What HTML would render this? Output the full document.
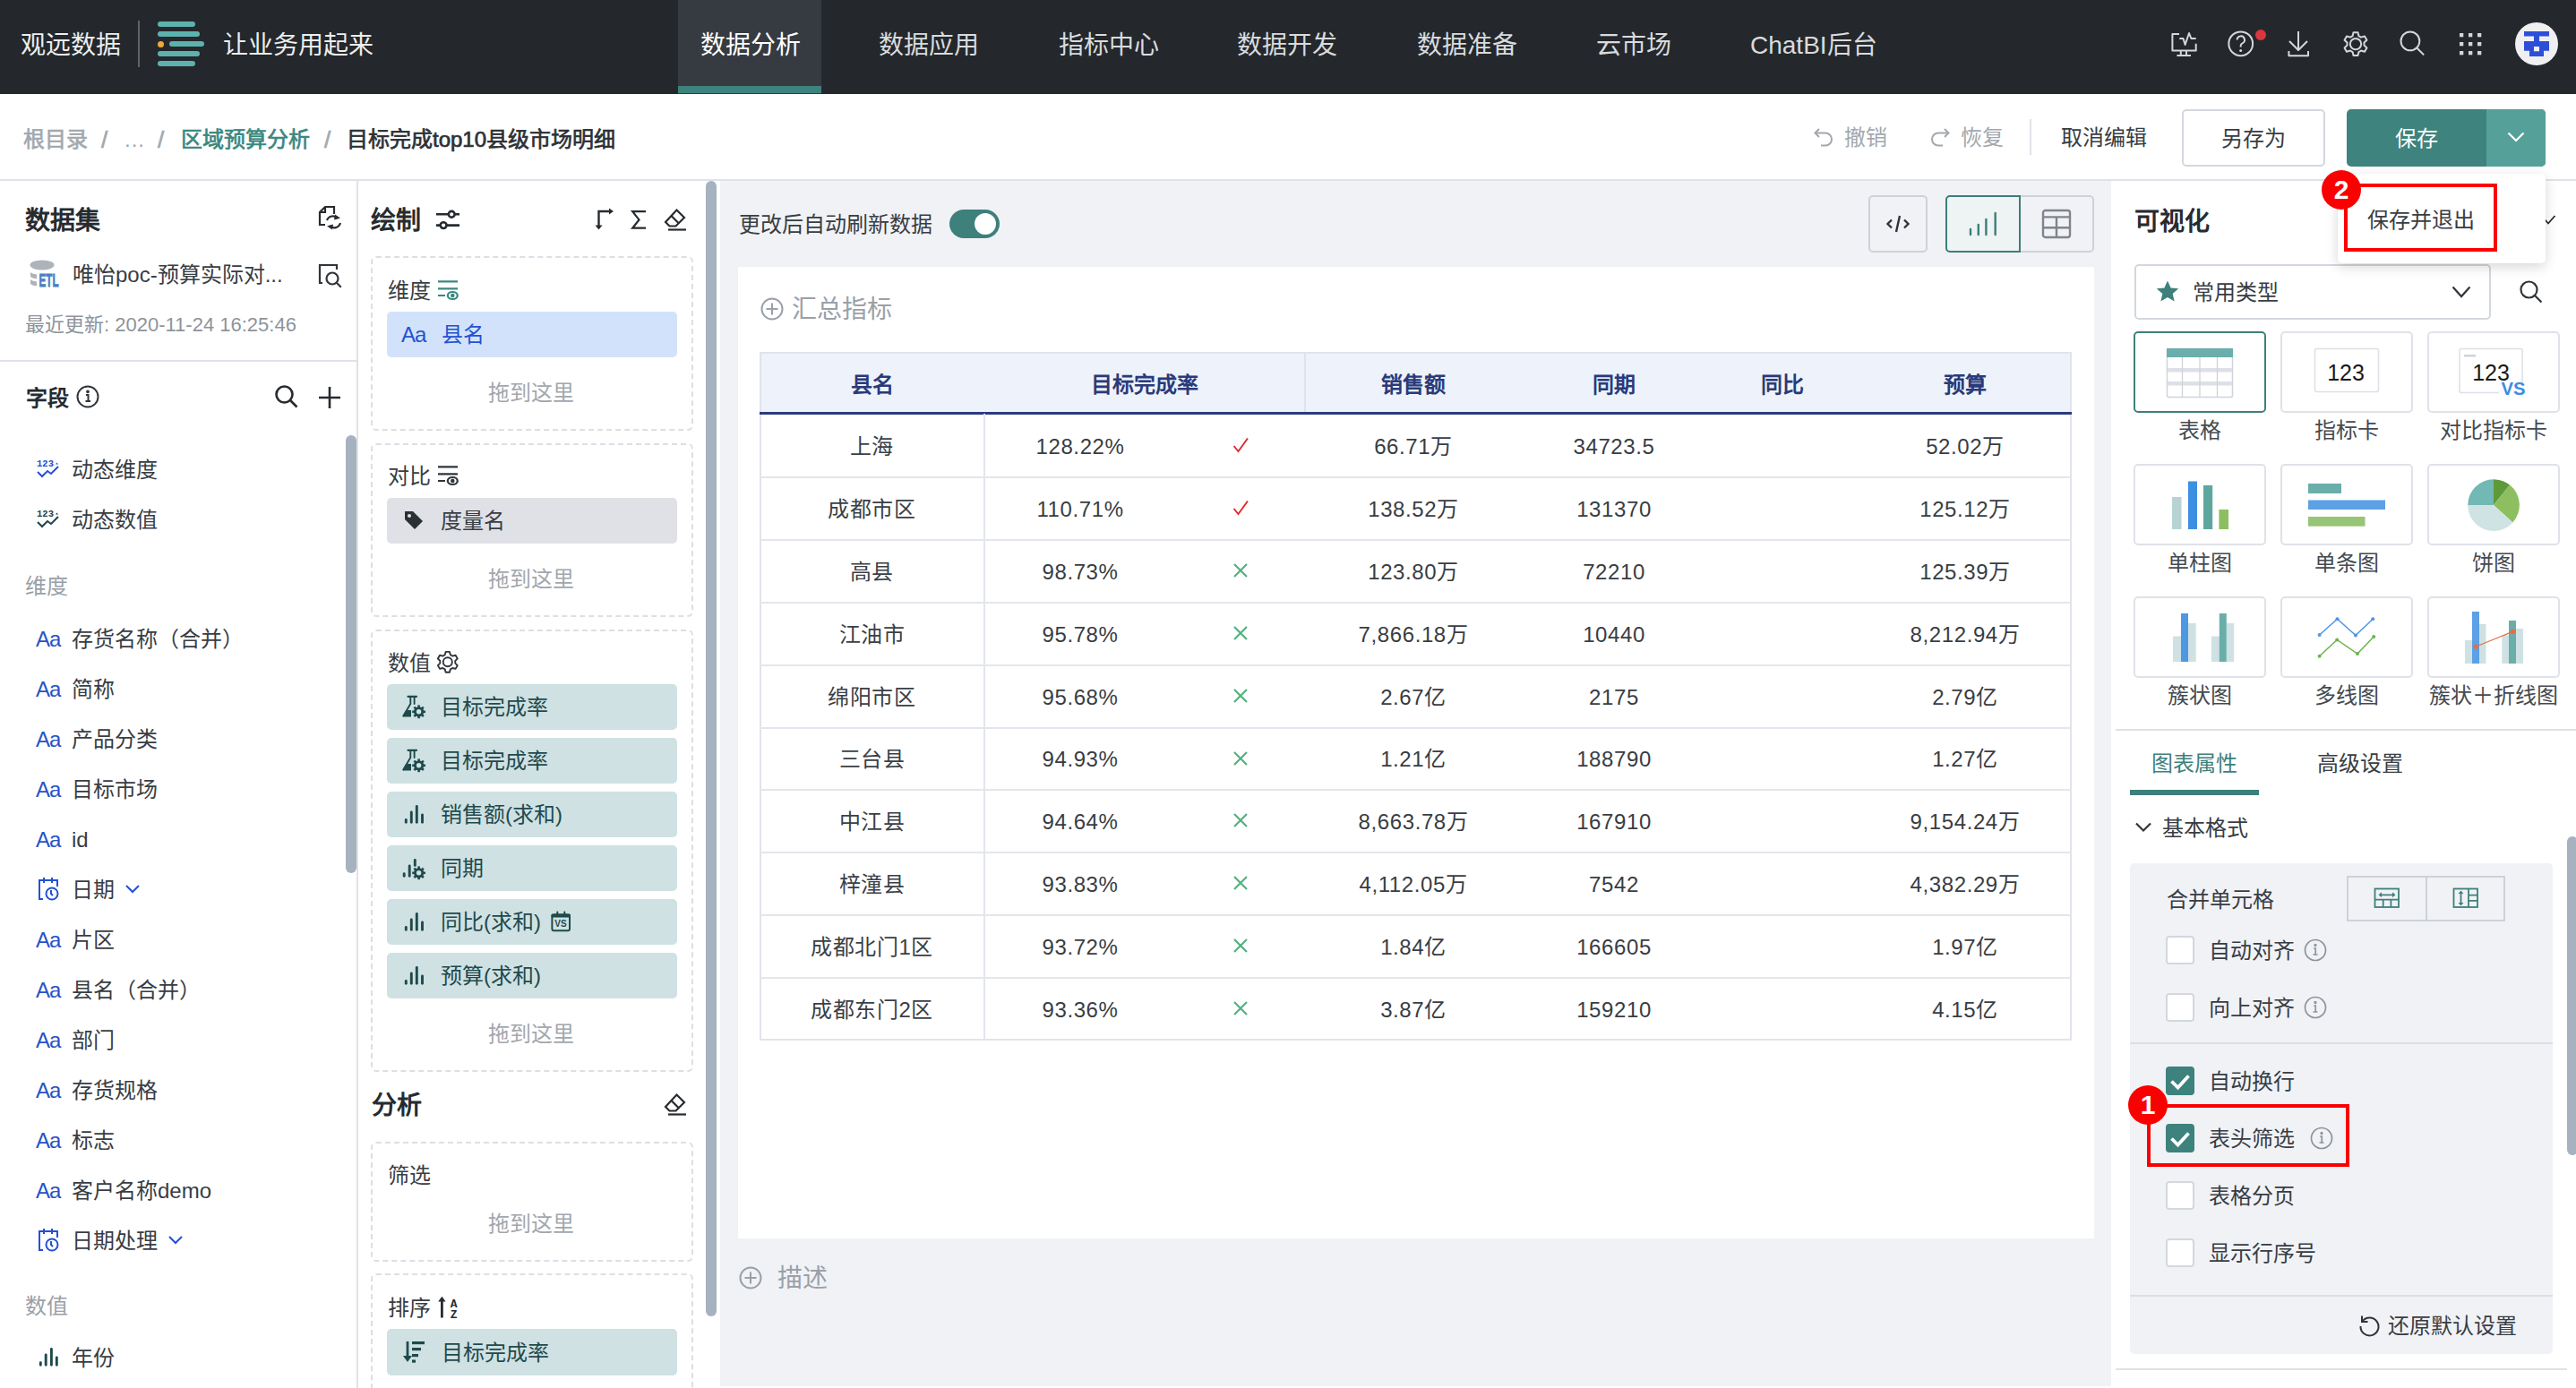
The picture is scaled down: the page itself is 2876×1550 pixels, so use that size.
<!DOCTYPE html>
<html lang="zh-CN">
<head>
<meta charset="utf-8">
<style>
*{box-sizing:border-box;margin:0;padding:0}
html,body{width:2876px;height:1550px;overflow:hidden;background:#fff}
body{font-family:"Liberation Sans",sans-serif;color:#383d43;position:relative}
.a{position:absolute}
.t{position:absolute;white-space:nowrap;line-height:40px;height:40px;margin-top:1px}
svg{position:absolute;overflow:visible}
/* nav */
#nav{left:0;top:0;width:2876px;height:105px;background:#24282c}
.nt{font-size:28px;color:#d9dbdd;top:29px;margin-top:2px}
/* crumb */
#crumb{left:0;top:105px;width:2876px;height:95px;background:#fff}
#crumbline{left:0;top:200px;width:2876px;height:2px;background:#dfe2e8}
.cb{font-size:24px;font-weight:normal;top:135px;-webkit-text-stroke:0.7px currentColor}
/* panels */
#p1{left:0;top:202px;width:398px;height:1348px;background:#fff}
#p1b{left:398px;top:202px;width:2px;height:1348px;background:#dfe2e8}
#p2{left:400px;top:202px;width:404px;height:1348px;background:#fff}
#canvas{left:804px;top:202px;width:1553px;height:1346px;background:#f1f2f6}
#p3{left:2357px;top:202px;width:519px;height:1348px;background:#fff}
.h28{font-size:28px;font-weight:bold;color:#262b30;margin-top:2px}
.f24{font-size:24px}
.fi{font-size:24px;color:#383d43}
.aa{font-size:24px;color:#2752c6;letter-spacing:-1px}
.box{position:absolute;border:2px dashed #dcdfe6;border-radius:6px}
.chip{position:absolute;left:432px;width:324px;height:51px;border-radius:5px;background:#cfe1e3}
.drop{font-size:24px;color:#a2a7ad}
.sb{position:absolute;background:#a6b2bf;border-radius:6px}
/* table */
.th{position:absolute;font-size:24px;font-weight:bold;color:#2a3a7a;text-align:center;line-height:40px;margin-top:2px}
.td{position:absolute;font-size:24px;color:#383d43;text-align:center;line-height:40px;margin-top:2px;letter-spacing:0.6px}
.tile{position:absolute;width:148px;height:91px;border:2px solid #dfe2e8;border-radius:5px;background:#fff}
.tl{position:absolute;font-size:24px;color:#454a50;text-align:center;width:180px;line-height:40px}
.ck{position:absolute;left:2418px;width:32px;height:32px;border:2px solid #d3d7de;border-radius:4px;background:#fff}
.ckd{background:#3d827d;border-color:#3d827d}
.ct{font-size:24px;color:#383d43;left:2466px}
.red{position:absolute;border:4px solid #fb0000}
.rc{position:absolute;width:44px;height:44px;border-radius:50%;background:#fb0000;color:#fff;font-weight:bold;font-size:30px;text-align:center;line-height:44px}
</style>
</head>
<body>
<!-- NAV -->
<div id="nav" class="a"></div>
<div class="t nt" style="left:23px;color:#eceeef">观远数据</div>
<div class="a" style="left:154px;top:23px;width:2px;height:52px;background:#5f6469"></div>
<div class="a" style="left:176px;top:24px;width:42px;height:6px;border-radius:3px;background:#5cb3ae"></div>
<div class="a" style="left:176px;top:35px;width:47px;height:6px;border-radius:3px;background:#5cb3ae"></div>
<div class="a" style="left:176px;top:45.5px;width:7px;height:7px;border-radius:50%;background:#efa93a"></div>
<div class="a" style="left:189px;top:46px;width:39px;height:6px;border-radius:3px;background:#5cb3ae"></div>
<div class="a" style="left:176px;top:57px;width:47px;height:6px;border-radius:3px;background:#5cb3ae"></div>
<div class="a" style="left:176px;top:68px;width:42px;height:6px;border-radius:3px;background:#5cb3ae"></div>
<div class="t nt" style="left:249px;color:#eceeef">让业务用起来</div>
<div class="a" style="left:757px;top:0;width:160px;height:105px;background:#363b41"></div>
<div class="a" style="left:757px;top:96px;width:160px;height:8px;background:#3d827d"></div>
<div class="t nt" style="left:782px;color:#fff">数据分析</div>
<div class="t nt" style="left:981px">数据应用</div>
<div class="t nt" style="left:1182px">指标中心</div>
<div class="t nt" style="left:1381px">数据开发</div>
<div class="t nt" style="left:1582px">数据准备</div>
<div class="t nt" style="left:1782px">云市场</div>
<div class="t nt" style="left:1954px">ChatBI后台</div>
<!-- NAV ICONS -->
<!-- monitor -->
<svg style="left:2410px;top:25px" width="260" height="50" viewBox="2410 25 260 50" fill="none" stroke="#d4d7da" stroke-width="2" stroke-linejoin="round">
<path d="M2433 38H2425.4V56.6H2451.7V48.8"/><path d="M2433.3 43H2437.5L2439.6 50L2444 37L2446.4 43H2451.7"/><path d="M2434.8 57v5M2441 57v5M2430.4 62H2446"/>
<circle cx="2501.7" cy="48.8" r="13.4"/><path d="M2497.6 44.6a4.2 4.2 0 1 1 5.9 3.8c-1 .5-1.8 1.2-1.8 2.4v1.8"/>
<path d="M2566 35V56M2556 46L2566 56 2576 46M2555.4 57V62.2H2577V57"/>
<path d="M2627.53 36.13 L2632.47 36.13 L2633.44 40.14 L2636.04 41.64 L2639.99 40.47 L2642.47 44.76 L2639.48 47.60 L2639.48 50.60 L2642.47 53.44 L2639.99 57.73 L2636.04 56.56 L2633.44 58.06 L2632.47 62.07 L2627.53 62.07 L2626.56 58.06 L2623.96 56.56 L2620.01 57.73 L2617.53 53.44 L2620.52 50.60 L2620.52 47.60 L2617.53 44.76 L2620.01 40.47 L2623.96 41.64 L2626.56 40.14Z"/><circle cx="2630" cy="49.1" r="6.2"/>
</svg>
<svg style="left:2410px;top:25px" width="260" height="50" viewBox="2410 25 260 50" fill="#d4d7da"><circle cx="2501.7" cy="56.4" r="1.5"/></svg>
<div class="a" style="left:2518px;top:33px;width:12px;height:12px;border-radius:50%;background:#d9363e"></div>
<!-- search -->
<svg style="left:2678px;top:34px" width="32" height="32" viewBox="0 0 32 32" fill="none" stroke="#d4d7da" stroke-width="2">
<circle cx="12.9" cy="11.9" r="10.4"/><path d="M20.3 19.5l7.9 7.9"/></svg>
<!-- grid -->
<svg style="left:2746px;top:37px" width="26" height="25" viewBox="0 0 26 25" fill="#d4d7da">
<rect x="0" y="0" width="4.3" height="4.3"/><rect x="10" y="0" width="4.3" height="4.3"/><rect x="20" y="0" width="4.3" height="4.3"/>
<rect x="0" y="10" width="4.3" height="4.3"/><rect x="10" y="10" width="4.3" height="4.3"/><rect x="20" y="10" width="4.3" height="4.3"/>
<rect x="0" y="20" width="4.3" height="4.3"/><rect x="10" y="20" width="4.3" height="4.3"/><rect x="20" y="20" width="4.3" height="4.3"/></svg>
<!-- avatar -->
<div class="a" style="left:2808px;top:25px;width:48px;height:48px;border-radius:50%;background:#f0f0f2"></div>
<svg style="left:2808px;top:25px" width="48" height="48" viewBox="0 0 48 48" fill="#2d4fd8">
<path d="M10 10h28v5.5H27v5.6h11v10.7h-6v6.1H16v-6.1h-6V21.1h11v-5.6H10z M21 26.9v5.4h6v-5.4z" fill-rule="evenodd"/></svg>
<div class="a" style="left:2828px;top:17px;width:0;height:0"></div>


<!-- CRUMB -->
<div id="crumb" class="a"></div>
<div id="crumbline" class="a"></div>
<div class="t cb" style="left:26px;color:#a3a8ae">根目录</div>
<div class="t cb" style="left:113px;color:#a3a8ae;font-size:26px">/</div>
<div class="t cb" style="left:139px;color:#a3a8ae;-webkit-text-stroke:0;letter-spacing:1px">...</div>
<div class="t cb" style="left:176px;color:#a3a8ae;font-size:26px">/</div>
<div class="t cb" style="left:202px;color:#3b8780">区域预算分析</div>
<div class="t cb" style="left:362px;color:#a3a8ae;font-size:26px">/</div>
<div class="t cb" style="left:387px;color:#2c3136">目标完成top10县级市场明细</div>

<!-- undo -->
<svg style="left:2025px;top:143px" width="22" height="20" viewBox="0 0 22 20" fill="none" stroke="#a3a8ae" stroke-width="2">
<path d="M6 1L1.5 5.5 6 10"/><path d="M2 5.5h11a7 7 0 0 1 0 14H8"/></svg>
<div class="t" style="left:2059px;top:133px;font-size:24px;color:#a3a8ae">撤销</div>
<svg style="left:2155px;top:143px" width="22" height="20" viewBox="0 0 22 20" fill="none" stroke="#a3a8ae" stroke-width="2">
<path d="M16 1l4.5 4.5L16 10"/><path d="M20 5.5H9a7 7 0 0 0 0 14h5"/></svg>
<div class="t" style="left:2189px;top:133px;font-size:24px;color:#a3a8ae">恢复</div>
<div class="a" style="left:2266px;top:133px;width:2px;height:40px;background:#dfe2e8"></div>
<div class="t" style="left:2301px;top:133px;font-size:24px;color:#383d43">取消编辑</div>
<div class="a" style="left:2436px;top:122px;width:160px;height:64px;border:2px solid #d3d7de;border-radius:5px;background:#fff"></div>
<div class="t" style="left:2436px;top:134px;width:160px;text-align:center;font-size:24px;color:#383d43">另存为</div>
<div class="a" style="left:2620px;top:122px;width:222px;height:64px;border-radius:5px;background:#3e837e;overflow:hidden"><div class="a" style="left:156px;top:0;width:66px;height:64px;background:#56a09a"></div></div>
<div class="t" style="left:2620px;top:134px;width:156px;text-align:center;font-size:24px;color:#fff">保存</div>
<svg style="left:2799px;top:147px" width="20" height="12" viewBox="0 0 20 12" fill="none" stroke="#fff" stroke-width="2.2"><path d="M1.5 1.5L10 10l8.5-8.5"/></svg>


<!-- PANELS -->
<div id="p1" class="a"></div>
<div id="p1b" class="a"></div>
<div id="p2" class="a"></div>
<div id="canvas" class="a"></div>
<div id="p3" class="a"></div>
<!-- CANVAS CONTENT -->
<div class="t" style="left:825px;top:230px;font-size:24px;color:#383d43">更改后自动刷新数据</div>
<div class="a" style="left:1060px;top:234px;width:56px;height:32px;border-radius:16px;background:#3d807c"></div>
<div class="a" style="left:1088px;top:238px;width:24px;height:24px;border-radius:50%;background:#fff"></div>
<div class="a" style="left:2086px;top:218px;width:66px;height:64px;border:2px solid #cdd1d8;border-radius:5px"></div>
<svg style="left:2106px;top:240px" width="26" height="20" viewBox="0 0 26 20" fill="none" stroke="#30353b" stroke-width="2.4">
<path d="M6 5.5L1.5 10 6 14.5M20 5.5l4.5 4.5-4.5 4.5M15 1l-4 18"/></svg>
<div class="a" style="left:2172px;top:218px;width:166px;height:64px;border:2px solid #cdd1d8;border-radius:5px"></div>
<div class="a" style="left:2172px;top:218px;width:84px;height:64px;border:2px solid #3a7f7a;border-radius:5px 0 0 5px;background:#eef3f3"></div>
<svg style="left:2196px;top:234px" width="36" height="32" viewBox="0 0 36 32" fill="none" stroke="#3a7f7a" stroke-width="2.4" stroke-linecap="round">
<path d="M4 22v6M12.8 17v11M21.4 11v17M31.7 4v24"/></svg>
<svg style="left:2279px;top:233px" width="34" height="34" viewBox="0 0 34 34" fill="none" stroke="#80848c" stroke-width="2.4">
<rect x="2" y="2" width="30" height="30" rx="2.5"/><path d="M2 9.4h30M2 21.2h30M17 9.4V32"/></svg>

<div class="a" style="left:824px;top:298px;width:1514px;height:1085px;background:#fff"></div>
<svg style="left:849px;top:332px" width="26" height="26" viewBox="0 0 26 26" fill="none" stroke="#9aa0a8" stroke-width="2">
<circle cx="13" cy="13" r="11.5"/><path d="M13 6.5v13M6.5 13h13"/></svg>
<div class="t" style="left:884px;top:325px;font-size:28px;color:#9aa0a8">汇总指标</div>
<div class="a" style="left:848px;top:393px;width:1465px;height:769px;border:2px solid #e1e4ea;border-bottom-width:2px"></div>
<div class="a" style="left:850px;top:395px;width:1461px;height:66px;background:#eef2fa"></div>
<div class="a" style="left:848px;top:460px;width:1465px;height:3px;background:#2b3a80"></div>
<div class="a" style="left:1456px;top:395px;width:2px;height:65px;background:#dfe3ec"></div>
<div class="th" style="left:848px;top:408px;width:251px">县名</div>
<div class="th" style="left:1099px;top:408px;width:358px">目标完成率</div>
<div class="th" style="left:1457px;top:408px;width:242px">销售额</div>
<div class="th" style="left:1699px;top:408px;width:206px">同期</div>
<div class="th" style="left:1905px;top:408px;width:170px">同比</div>
<div class="th" style="left:2075px;top:408px;width:238px">预算</div>
<div class="td" style="left:848px;top:477px;width:251px;color:#3a3f46">上海</div>
<div class="td" style="left:1106px;top:477px;width:200px">128.22%</div>
<svg style="left:1375px;top:486px" width="20" height="20" viewBox="0 0 20 20" fill="none" stroke="#e3262c" stroke-width="1.9"><path d="M2.5 12l5 6L18 3.5"/></svg>
<div class="td" style="left:1457px;top:477px;width:242px">66.71万</div>
<div class="td" style="left:1699px;top:477px;width:206px">34723.5</div>
<div class="td" style="left:2075px;top:477px;width:238px">52.02万</div>
<div class="a" style="left:848px;top:532px;width:1465px;height:2px;background:#e3e6ec"></div>
<div class="td" style="left:848px;top:547px;width:251px;color:#3a3f46">成都市区</div>
<div class="td" style="left:1106px;top:547px;width:200px">110.71%</div>
<svg style="left:1375px;top:556px" width="20" height="20" viewBox="0 0 20 20" fill="none" stroke="#e3262c" stroke-width="1.9"><path d="M2.5 12l5 6L18 3.5"/></svg>
<div class="td" style="left:1457px;top:547px;width:242px">138.52万</div>
<div class="td" style="left:1699px;top:547px;width:206px">131370</div>
<div class="td" style="left:2075px;top:547px;width:238px">125.12万</div>
<div class="a" style="left:848px;top:602px;width:1465px;height:2px;background:#e3e6ec"></div>
<div class="td" style="left:848px;top:617px;width:251px;color:#3a3f46">高县</div>
<div class="td" style="left:1106px;top:617px;width:200px">98.73%</div>
<svg style="left:1376px;top:628px" width="18" height="18" viewBox="0 0 18 18" fill="none" stroke="#52b27e" stroke-width="2.2"><path d="M2 2l14 14M16 2L2 16"/></svg>
<div class="td" style="left:1457px;top:617px;width:242px">123.80万</div>
<div class="td" style="left:1699px;top:617px;width:206px">72210</div>
<div class="td" style="left:2075px;top:617px;width:238px">125.39万</div>
<div class="a" style="left:848px;top:672px;width:1465px;height:2px;background:#e3e6ec"></div>
<div class="td" style="left:848px;top:687px;width:251px;color:#3a3f46">江油市</div>
<div class="td" style="left:1106px;top:687px;width:200px">95.78%</div>
<svg style="left:1376px;top:698px" width="18" height="18" viewBox="0 0 18 18" fill="none" stroke="#52b27e" stroke-width="2.2"><path d="M2 2l14 14M16 2L2 16"/></svg>
<div class="td" style="left:1457px;top:687px;width:242px">7,866.18万</div>
<div class="td" style="left:1699px;top:687px;width:206px">10440</div>
<div class="td" style="left:2075px;top:687px;width:238px">8,212.94万</div>
<div class="a" style="left:848px;top:742px;width:1465px;height:2px;background:#e3e6ec"></div>
<div class="td" style="left:848px;top:757px;width:251px;color:#3a3f46">绵阳市区</div>
<div class="td" style="left:1106px;top:757px;width:200px">95.68%</div>
<svg style="left:1376px;top:768px" width="18" height="18" viewBox="0 0 18 18" fill="none" stroke="#52b27e" stroke-width="2.2"><path d="M2 2l14 14M16 2L2 16"/></svg>
<div class="td" style="left:1457px;top:757px;width:242px">2.67亿</div>
<div class="td" style="left:1699px;top:757px;width:206px">2175</div>
<div class="td" style="left:2075px;top:757px;width:238px">2.79亿</div>
<div class="a" style="left:848px;top:812px;width:1465px;height:2px;background:#e3e6ec"></div>
<div class="td" style="left:848px;top:826px;width:251px;color:#3a3f46">三台县</div>
<div class="td" style="left:1106px;top:826px;width:200px">94.93%</div>
<svg style="left:1376px;top:838px" width="18" height="18" viewBox="0 0 18 18" fill="none" stroke="#52b27e" stroke-width="2.2"><path d="M2 2l14 14M16 2L2 16"/></svg>
<div class="td" style="left:1457px;top:826px;width:242px">1.21亿</div>
<div class="td" style="left:1699px;top:826px;width:206px">188790</div>
<div class="td" style="left:2075px;top:826px;width:238px">1.27亿</div>
<div class="a" style="left:848px;top:881px;width:1465px;height:2px;background:#e3e6ec"></div>
<div class="td" style="left:848px;top:896px;width:251px;color:#3a3f46">中江县</div>
<div class="td" style="left:1106px;top:896px;width:200px">94.64%</div>
<svg style="left:1376px;top:907px" width="18" height="18" viewBox="0 0 18 18" fill="none" stroke="#52b27e" stroke-width="2.2"><path d="M2 2l14 14M16 2L2 16"/></svg>
<div class="td" style="left:1457px;top:896px;width:242px">8,663.78万</div>
<div class="td" style="left:1699px;top:896px;width:206px">167910</div>
<div class="td" style="left:2075px;top:896px;width:238px">9,154.24万</div>
<div class="a" style="left:848px;top:951px;width:1465px;height:2px;background:#e3e6ec"></div>
<div class="td" style="left:848px;top:966px;width:251px;color:#3a3f46">梓潼县</div>
<div class="td" style="left:1106px;top:966px;width:200px">93.83%</div>
<svg style="left:1376px;top:977px" width="18" height="18" viewBox="0 0 18 18" fill="none" stroke="#52b27e" stroke-width="2.2"><path d="M2 2l14 14M16 2L2 16"/></svg>
<div class="td" style="left:1457px;top:966px;width:242px">4,112.05万</div>
<div class="td" style="left:1699px;top:966px;width:206px">7542</div>
<div class="td" style="left:2075px;top:966px;width:238px">4,382.29万</div>
<div class="a" style="left:848px;top:1021px;width:1465px;height:2px;background:#e3e6ec"></div>
<div class="td" style="left:848px;top:1036px;width:251px;color:#3a3f46">成都北门1区</div>
<div class="td" style="left:1106px;top:1036px;width:200px">93.72%</div>
<svg style="left:1376px;top:1047px" width="18" height="18" viewBox="0 0 18 18" fill="none" stroke="#52b27e" stroke-width="2.2"><path d="M2 2l14 14M16 2L2 16"/></svg>
<div class="td" style="left:1457px;top:1036px;width:242px">1.84亿</div>
<div class="td" style="left:1699px;top:1036px;width:206px">166605</div>
<div class="td" style="left:2075px;top:1036px;width:238px">1.97亿</div>
<div class="a" style="left:848px;top:1091px;width:1465px;height:2px;background:#e3e6ec"></div>
<div class="td" style="left:848px;top:1106px;width:251px;color:#3a3f46">成都东门2区</div>
<div class="td" style="left:1106px;top:1106px;width:200px">93.36%</div>
<svg style="left:1376px;top:1117px" width="18" height="18" viewBox="0 0 18 18" fill="none" stroke="#52b27e" stroke-width="2.2"><path d="M2 2l14 14M16 2L2 16"/></svg>
<div class="td" style="left:1457px;top:1106px;width:242px">3.87亿</div>
<div class="td" style="left:1699px;top:1106px;width:206px">159210</div>
<div class="td" style="left:2075px;top:1106px;width:238px">4.15亿</div>
<div class="a" style="left:1098px;top:462px;width:2px;height:698px;background:#e3e6ec"></div>
<svg style="left:825px;top:1414px" width="26" height="26" viewBox="0 0 26 26" fill="none" stroke="#9aa0a8" stroke-width="2">
<circle cx="13" cy="13" r="11.5"/><path d="M13 6.5v13M6.5 13h13"/></svg>
<div class="t" style="left:868px;top:1407px;font-size:28px;color:#9aa0a8">描述</div>
<!-- P3 CONTENT -->
<div class="t h28" style="left:2383px;top:226px">可视化</div>
<svg style="left:2830px;top:230px" width="30" height="30" viewBox="2830 230 30 30" fill="none" stroke="#262b30" stroke-width="1.8"><path d="M2841.5 245.5L2845 249.5 2852.5 241"/></svg>
<div class="a" style="left:2383px;top:295px;width:398px;height:62px;border:2px solid #d3d7de;border-radius:5px;background:#fff"></div>
<svg style="left:2407px;top:313px" width="26" height="25" viewBox="0 0 26 25" fill="#3e807b">
<path d="M13 0.5l3.6 8 8.6.8-6.5 5.8 1.9 8.5L13 19.1l-7.6 4.5 1.9-8.5L0.8 9.3l8.6-.8z"/></svg>
<div class="t" style="left:2448px;top:306px;font-size:24px;color:#383d43">常用类型</div>
<svg style="left:2737px;top:319px" width="22" height="14" viewBox="0 0 22 14" fill="none" stroke="#30353b" stroke-width="2.2"><path d="M1.5 1.5L11 12l9.5-10.5"/></svg>
<svg style="left:2813px;top:313px" width="26" height="26" viewBox="0 0 26 26" fill="none" stroke="#30353b" stroke-width="2.2">
<circle cx="10.5" cy="10.5" r="9"/><path d="M17 17l7.5 7.5"/></svg>
<div class="tile" style="left:2382px;top:370px;border-color:#3e807b"></div>
<div class="tl" style="left:2366px;top:461px">表格</div>
<div class="tile" style="left:2546px;top:370px;"></div>
<div class="tl" style="left:2530px;top:461px">指标卡</div>
<div class="tile" style="left:2710px;top:370px;"></div>
<div class="tl" style="left:2694px;top:461px">对比指标卡</div>
<div class="tile" style="left:2382px;top:518px;"></div>
<div class="tl" style="left:2366px;top:609px">单柱图</div>
<div class="tile" style="left:2546px;top:518px;"></div>
<div class="tl" style="left:2530px;top:609px">单条图</div>
<div class="tile" style="left:2710px;top:518px;"></div>
<div class="tl" style="left:2694px;top:609px">饼图</div>
<div class="tile" style="left:2382px;top:666px;"></div>
<div class="tl" style="left:2366px;top:757px">簇状图</div>
<div class="tile" style="left:2546px;top:666px;"></div>
<div class="tl" style="left:2530px;top:757px">多线图</div>
<div class="tile" style="left:2710px;top:666px;"></div>
<div class="tl" style="left:2694px;top:757px">簇状＋折线图</div>
<svg style="left:2382px;top:370px" width="148" height="92" viewBox="2382 370 148 92">
<rect x="2419.5" y="389.5" width="73" height="54" rx="2" fill="#fff" stroke="#cfd3da" stroke-width="1.5"/>
<rect x="2419" y="389" width="74" height="10" fill="#6aafab"/>
<rect x="2420" y="411" width="72" height="4.5" fill="#dde0e6"/><rect x="2420" y="426" width="72" height="4.5" fill="#dde0e6"/>
<path d="M2436.5 399v44M2456 399v44M2475.5 399v44" stroke="#cfd3da" stroke-width="1.3"/></svg>
<svg style="left:2546px;top:370px" width="148" height="92" viewBox="2546 370 148 92">
<rect x="2584.5" y="389.5" width="71" height="48" rx="2" fill="#fff" stroke="#dcdfe5" stroke-width="1.5"/>
<text x="2619" y="425" text-anchor="middle" font-family="Liberation Sans" font-size="25" fill="#1a1a1a">123</text></svg>
<svg style="left:2710px;top:370px" width="148" height="92" viewBox="2710 370 148 92">
<path d="M2790 438.5h-42a2 2 0 0 1-2-2v-45a2 2 0 0 1 2-2h66a2 2 0 0 1 2 2v38" fill="#fff" stroke="#dcdfe5" stroke-width="1.5"/>
<rect x="2751" y="396" width="13" height="2.5" fill="#cfd3da"/>
<text x="2781" y="425" text-anchor="middle" font-family="Liberation Sans" font-size="25" fill="#1a1a1a">123</text>
<text x="2806" y="441" text-anchor="middle" font-family="Liberation Sans" font-weight="bold" font-size="20" fill="#3b8de0" textLength="27" lengthAdjust="spacingAndGlyphs">VS</text></svg>
<svg style="left:2382px;top:518px" width="148" height="92" viewBox="2382 518 148 92">
<rect x="2425" y="555" width="10.5" height="36" fill="#b7d3d4"/><rect x="2443" y="537.5" width="10" height="53.5" fill="#3d8fe3"/>
<rect x="2460" y="542" width="10.2" height="49" fill="#5ea79f"/><rect x="2477.4" y="569" width="10.6" height="22" fill="#8dbf61"/></svg>
<svg style="left:2546px;top:518px" width="148" height="92" viewBox="2546 518 148 92">
<rect x="2577" y="540" width="37" height="11" fill="#6aaeaa"/><rect x="2577" y="558.5" width="86" height="10.5" fill="#5ca0e5"/>
<rect x="2577" y="577" width="63.5" height="10.7" fill="#97c477"/></svg>
<svg style="left:2710px;top:518px" width="148" height="92" viewBox="2710 518 148 92">
<path d="M2784 564V535.2A28.8 28.8 0 0 1 2802.1 541.6z" fill="#5e9a3a"/>
<path d="M2784 564L2802.1 541.6A28.8 28.8 0 0 1 2805.4 583.4z" fill="#8dbf61"/>
<path d="M2784 564L2805.4 583.4A28.8 28.8 0 0 1 2755.2 564z" fill="#d0e3e4"/>
<path d="M2784 564H2755.2A28.8 28.8 0 0 1 2784 535.2z" fill="#72b8b4"/></svg>
<svg style="left:2382px;top:666px" width="148" height="92" viewBox="2382 666 148 92">
<rect x="2426" y="710.5" width="9" height="28.5" fill="#cfe1e3"/><rect x="2443" y="696" width="8.7" height="43" fill="#cfe1e3"/><rect x="2435" y="685" width="8" height="54" fill="#4e97e3"/>
<rect x="2469" y="710.5" width="9" height="28.5" fill="#cfe1e3"/><rect x="2486" y="696" width="8.2" height="43" fill="#cfe1e3"/><rect x="2477.8" y="685" width="8" height="54" fill="#6aaeaa"/></svg>
<svg style="left:2546px;top:666px" width="148" height="92" viewBox="2546 666 148 92">
<path d="M2589.6 709L2609.5 691.3 2630 709.5 2649.2 691.3" fill="none" stroke="#4d97e3" stroke-width="1.5"/>
<path d="M2589.6 732.8L2609.2 714.5 2632 730 2650.2 711" fill="none" stroke="#6db44e" stroke-width="1.5"/>
<g fill="#4d97e3"><circle cx="2589.6" cy="709" r="2"/><circle cx="2609.5" cy="691.3" r="2"/><circle cx="2630" cy="709.5" r="2"/><circle cx="2649.2" cy="691.3" r="2"/></g>
<g fill="#6db44e"><circle cx="2589.6" cy="732.8" r="2"/><circle cx="2609.2" cy="714.5" r="2"/><circle cx="2632" cy="730" r="2"/><circle cx="2650.2" cy="711" r="2"/></g></svg>
<svg style="left:2710px;top:666px" width="148" height="92" viewBox="2710 666 148 92">
<rect x="2752" y="715" width="9" height="26" fill="#cfe1e3"/><rect x="2767" y="697" width="8.5" height="44" fill="#cfe1e3"/><rect x="2760" y="683" width="8" height="58" fill="#5ca0e5"/>
<rect x="2793.3" y="709.5" width="9" height="31.5" fill="#cfe1e3"/><rect x="2808" y="702" width="9" height="39" fill="#cfe1e3"/><rect x="2801" y="693" width="8" height="48" fill="#6aaeaa"/>
<path d="M2764.4 722L2805.7 705.2" stroke="#e07048" stroke-width="1.3"/><circle cx="2764.4" cy="722" r="2.8" fill="#e07048"/><circle cx="2805.7" cy="705.2" r="2.8" fill="#e07048"/></svg>
<div class="a" style="left:2362px;top:814px;width:514px;height:2px;background:#dfe2e8"></div>
<div class="t" style="left:2402px;top:832px;font-size:24px;color:#3e807b">图表属性</div>
<div class="t" style="left:2587px;top:832px;font-size:24px;color:#383d43">高级设置</div>
<div class="a" style="left:2378px;top:882px;width:144px;height:6px;background:#3e807b"></div>
<svg style="left:2384px;top:918px" width="18" height="12" viewBox="0 0 18 12" fill="none" stroke="#30353b" stroke-width="2.2"><path d="M1 1.5l8 8 8-8"/></svg>
<div class="t" style="left:2414px;top:904px;font-size:24px;color:#383d43">基本格式</div>
<div class="sb" style="left:2866px;top:934px;width:12px;height:356px"></div>
<div class="a" style="left:2378px;top:964px;width:472px;height:548px;border-radius:5px;background:#f1f2f6"></div>
<div class="t" style="left:2419px;top:984px;font-size:24px;color:#383d43">合并单元格</div>
<div class="a" style="left:2620px;top:978px;width:177px;height:51px;border:2px solid #cdd1d8"></div>
<div class="a" style="left:2708px;top:978px;width:2px;height:51px;background:#cdd1d8"></div>
<svg style="left:2650px;top:991px" width="30" height="24" viewBox="2650 991 30 24" fill="none" stroke="#3e807b" stroke-width="1.8">
<rect x="2651.5" y="992.5" width="26.5" height="20.5"/><path d="M2651.5 1004.6h26.5M2660.7 1004.6v8.4M2669.4 1004.6v8.4M2658 999.3h14"/>
<path d="M2655.5 999.3l3.5-3v6zM2674.5 999.3l-3.5-3v6z" fill="#3e807b" stroke="none"/></svg>
<svg style="left:2738px;top:991px" width="30" height="24" viewBox="2738 991 30 24" fill="none" stroke="#3e807b" stroke-width="1.8">
<rect x="2739.5" y="992.5" width="26.5" height="20.5"/><path d="M2756 992.5v20.5M2756 999.7h10M2756 1005.9h10M2747.5 997v12"/>
<path d="M2747.5 994.5l-3 3.5h6zM2747.5 1011.5l-3-3.5h6z" fill="#3e807b" stroke="none"/></svg>
<div class="ck" style="top:1045px"></div>
<div class="t ct" style="top:1041px">自动对齐</div>
<svg style="left:2572px;top:1048px" width="26" height="26" viewBox="0 0 26 26" fill="none" stroke="#8e949b" stroke-width="1.7">
<circle cx="13" cy="13" r="11.5"/><path d="M11.2 11h2v7M10.5 18h5"/><circle cx="13" cy="7.5" r="0.8" fill="#8e949b"/></svg>
<div class="ck" style="top:1109px"></div>
<div class="t ct" style="top:1105px">向上对齐</div>
<svg style="left:2572px;top:1112px" width="26" height="26" viewBox="0 0 26 26" fill="none" stroke="#8e949b" stroke-width="1.7">
<circle cx="13" cy="13" r="11.5"/><path d="M11.2 11h2v7M10.5 18h5"/><circle cx="13" cy="7.5" r="0.8" fill="#8e949b"/></svg>
<div class="a" style="left:2378px;top:1164px;width:472px;height:2px;background:#dcdfe5"></div>
<div class="ck ckd" style="top:1191px"></div>
<svg style="left:2418px;top:1191px" width="32" height="32" viewBox="0 0 32 32" fill="none" stroke="#fff" stroke-width="3.8"><path d="M6.5 16.5l7 7 12-13"/></svg>
<div class="t ct" style="top:1187px">自动换行</div>
<div class="ck ckd" style="top:1255px"></div>
<svg style="left:2418px;top:1255px" width="32" height="32" viewBox="0 0 32 32" fill="none" stroke="#fff" stroke-width="3.8"><path d="M6.5 16.5l7 7 12-13"/></svg>
<div class="t ct" style="top:1251px">表头筛选</div>
<svg style="left:2579px;top:1258px" width="26" height="26" viewBox="0 0 26 26" fill="none" stroke="#8e949b" stroke-width="1.7">
<circle cx="13" cy="13" r="11.5"/><path d="M11.2 11h2v7M10.5 18h5"/><circle cx="13" cy="7.5" r="0.8" fill="#8e949b"/></svg>
<div class="ck" style="top:1319px"></div>
<div class="t ct" style="top:1315px">表格分页</div>
<div class="ck" style="top:1383px"></div>
<div class="t ct" style="top:1379px">显示行序号</div>
<div class="a" style="left:2378px;top:1446px;width:472px;height:2px;background:#dcdfe5"></div>
<svg style="left:2633px;top:1468px" width="24" height="24" viewBox="0 0 24 24" fill="none" stroke="#30353b" stroke-width="2">
<path d="M4.5 7.5A10 10 0 1 1 2.5 13"/><path d="M4 1.5v6.5h6.5"/></svg>
<div class="t" style="left:2666px;top:1460px;font-size:24px;color:#383d43">还原默认设置</div>
<div class="a" style="left:2362px;top:1528px;width:504px;height:2px;background:#dfe2e8"></div>
<!-- POPUP -->
<div class="a" style="left:2610px;top:194px;width:232px;height:100px;background:#fff;border-radius:5px;box-shadow:0 4px 14px rgba(0,0,0,0.16)"></div>
<div class="t" style="left:2643px;top:225px;font-size:24px;color:#383d43">保存并退出</div>
<div class="red" style="left:2617px;top:205px;width:171px;height:76px"></div>
<div class="rc" style="left:2592px;top:190px">2</div>
<div class="red" style="left:2397px;top:1233px;width:226px;height:70px"></div>
<div class="rc" style="left:2376px;top:1212px">1</div>
<!-- P2 CONTENT -->
<div class="t h28" style="left:414px;top:225px">绘制</div>
<svg style="left:487px;top:234px" width="26" height="22" viewBox="0 0 26 22" fill="none" stroke="#262b30" stroke-width="2.6">
<path d="M0 5.3h14M21 5.3h5M0 17.6h5M12 17.6h14"/><circle cx="17.2" cy="5.3" r="3.4"/><circle cx="8.1" cy="17.6" r="3.4"/></svg>
<svg style="left:663px;top:233px" width="24" height="25" viewBox="0 0 24 25" fill="none" stroke="#262b30" stroke-width="2.4">
<path d="M5.5 21V3H18"/></svg>
<svg style="left:663px;top:233px" width="24" height="25" viewBox="0 0 24 25" fill="#262b30"><path d="M17 -0.5l5 3.5-5 3.5zM1.5 18.5h8l-4 5z"/></svg>
<svg style="left:705px;top:235px" width="17" height="21" viewBox="0 0 17 21" fill="none" stroke="#262b30" stroke-width="2.2">
<path d="M16 1.1H1.2l7.3 9.3-7.3 9.3H16"/></svg>
<svg style="left:741px;top:233px" width="26" height="25" viewBox="0 0 26 25" fill="none" stroke="#262b30" stroke-width="2.2">
<path d="M14.5 1.5l8.5 8.5-9.5 9.5H6.5L2 15z"/><path d="M8.5 8l8.5 8.5"/><path d="M5 23.5h20"/></svg>
<div class="sb" style="left:788px;top:202px;width:12px;height:1268px"></div>

<div class="box" style="left:414px;top:286px;width:360px;height:195px"></div>
<div class="t" style="left:433px;top:304px;font-size:24px;color:#383d43">维度</div>
<svg style="left:489px;top:313px" width="23" height="22" viewBox="0 0 23 22" fill="none" stroke="#3a8880" stroke-width="2.2">
<path d="M0 1.4h22M0 9.3h22M0 17h8"/><ellipse cx="16.3" cy="17" rx="5.5" ry="4"/><circle cx="16.3" cy="17" r="1.2" fill="#3a8880"/></svg>
<div class="chip" style="top:348px;background:#d3e2fb"></div>
<div class="t aa" style="left:448px;top:353px;color:#2251d1">Aa</div>
<div class="t" style="left:493px;top:353px;font-size:24px;color:#2251d1">县名</div>
<div class="t drop" style="left:545px;top:418px">拖到这里</div>

<div class="box" style="left:414px;top:495px;width:360px;height:194px"></div>
<div class="t" style="left:433px;top:511px;font-size:24px;color:#383d43">对比</div>
<svg style="left:489px;top:520px" width="23" height="22" viewBox="0 0 23 22" fill="none" stroke="#30353b" stroke-width="2.2">
<path d="M0 1.4h22M0 9.3h22M0 17h8"/><ellipse cx="16.3" cy="17" rx="5.5" ry="4"/><circle cx="16.3" cy="17" r="1.2" fill="#30353b"/></svg>
<div class="chip" style="top:556px;background:#dfe1e6"></div>
<svg style="left:451px;top:570px" width="22" height="22" viewBox="0 0 22 22" fill="#2b3035">
<path d="M1 1h9l11 11-9 9L1 10z"/><circle cx="6" cy="6" r="2" fill="#dfe1e6"/></svg>
<div class="t" style="left:492px;top:561px;font-size:24px;color:#383d43">度量名</div>
<div class="t drop" style="left:545px;top:626px">拖到这里</div>

<div class="box" style="left:414px;top:703px;width:360px;height:494px"></div>
<div class="t" style="left:433px;top:720px;font-size:24px;color:#383d43">数值</div>
<svg style="left:480px;top:720px" width="40" height="40" viewBox="480 720 40 40" fill="none" stroke="#30353b" stroke-width="1.9" stroke-linejoin="round">
<path d="M497.63 727.91 L501.97 727.91 L502.88 731.27 L505.21 732.62 L508.58 731.72 L510.75 735.49 L508.29 737.95 L508.29 740.65 L510.75 743.11 L508.58 746.88 L505.21 745.98 L502.88 747.33 L501.97 750.69 L497.63 750.69 L496.72 747.33 L494.39 745.98 L491.02 746.88 L488.85 743.11 L491.31 740.65 L491.31 737.95 L488.85 735.49 L491.02 731.72 L494.39 732.62 L496.72 731.27Z"/><circle cx="499.8" cy="739.3" r="5"/></svg>
<div class="chip" style="top:764px"></div>
<svg style="left:440px;top:764px" width="50" height="51" viewBox="440 764 50 51"><path d="M455.5 777.8h9.5" stroke="#1f4a4c" stroke-width="2.2" stroke-linecap="round"/><path d="M458.3 778v8L450.3 799.5M462.6 778v8" fill="none" stroke="#1f4a4c" stroke-width="1.9" stroke-linecap="round"/><path d="M453.5 793H459V800.6H451.2Q449 800.6 449.8 799z" fill="#1f4a4c"/><circle cx="467.6" cy="794.8" r="5.6" fill="#1f4a4c"/><rect x="466.30" y="787.40" width="2.6" height="3.00" fill="#1f4a4c" transform="rotate(0.0 467.6 794.8)"/><rect x="466.30" y="787.40" width="2.6" height="3.00" fill="#1f4a4c" transform="rotate(45.0 467.6 794.8)"/><rect x="466.30" y="787.40" width="2.6" height="3.00" fill="#1f4a4c" transform="rotate(90.0 467.6 794.8)"/><rect x="466.30" y="787.40" width="2.6" height="3.00" fill="#1f4a4c" transform="rotate(135.0 467.6 794.8)"/><rect x="466.30" y="787.40" width="2.6" height="3.00" fill="#1f4a4c" transform="rotate(180.0 467.6 794.8)"/><rect x="466.30" y="787.40" width="2.6" height="3.00" fill="#1f4a4c" transform="rotate(225.0 467.6 794.8)"/><rect x="466.30" y="787.40" width="2.6" height="3.00" fill="#1f4a4c" transform="rotate(270.0 467.6 794.8)"/><rect x="466.30" y="787.40" width="2.6" height="3.00" fill="#1f4a4c" transform="rotate(315.0 467.6 794.8)"/><circle cx="467.6" cy="794.8" r="2.7" fill="#cfe1e3"/></svg>
<div class="t" style="left:492px;top:769px;font-size:24px;color:#1f4a4c">目标完成率</div>
<div class="chip" style="top:824px"></div>
<svg style="left:440px;top:824px" width="50" height="51" viewBox="440 824 50 51"><path d="M455.5 837.8h9.5" stroke="#1f4a4c" stroke-width="2.2" stroke-linecap="round"/><path d="M458.3 838v8L450.3 859.5M462.6 838v8" fill="none" stroke="#1f4a4c" stroke-width="1.9" stroke-linecap="round"/><path d="M453.5 853H459V860.6H451.2Q449 860.6 449.8 859z" fill="#1f4a4c"/><circle cx="467.6" cy="854.8" r="5.6" fill="#1f4a4c"/><rect x="466.30" y="847.40" width="2.6" height="3.00" fill="#1f4a4c" transform="rotate(0.0 467.6 854.8)"/><rect x="466.30" y="847.40" width="2.6" height="3.00" fill="#1f4a4c" transform="rotate(45.0 467.6 854.8)"/><rect x="466.30" y="847.40" width="2.6" height="3.00" fill="#1f4a4c" transform="rotate(90.0 467.6 854.8)"/><rect x="466.30" y="847.40" width="2.6" height="3.00" fill="#1f4a4c" transform="rotate(135.0 467.6 854.8)"/><rect x="466.30" y="847.40" width="2.6" height="3.00" fill="#1f4a4c" transform="rotate(180.0 467.6 854.8)"/><rect x="466.30" y="847.40" width="2.6" height="3.00" fill="#1f4a4c" transform="rotate(225.0 467.6 854.8)"/><rect x="466.30" y="847.40" width="2.6" height="3.00" fill="#1f4a4c" transform="rotate(270.0 467.6 854.8)"/><rect x="466.30" y="847.40" width="2.6" height="3.00" fill="#1f4a4c" transform="rotate(315.0 467.6 854.8)"/><circle cx="467.6" cy="854.8" r="2.7" fill="#cfe1e3"/></svg>
<div class="t" style="left:492px;top:829px;font-size:24px;color:#1f4a4c">目标完成率</div>
<div class="chip" style="top:884px"></div>
<svg style="left:440px;top:884px" width="50" height="51" viewBox="440 884 50 51"><g stroke="#1f4a4c" stroke-width="2.9" stroke-linecap="round"><path d="M453.3 915.4V918.3"/><path d="M459.3 907V918.3"/><path d="M465.3 900.4V918.3"/><path d="M471.5 910V918.3"/></g></svg>
<div class="t" style="left:492px;top:889px;font-size:24px;color:#1f4a4c">销售额(求和)</div>
<div class="chip" style="top:944px"></div>
<svg style="left:440px;top:944px" width="50" height="51" viewBox="440 944 50 51"><g stroke="#1f4a4c" stroke-width="2.9" stroke-linecap="round"><path d="M451.2 975.6V978.2"/><path d="M457.2 967V978.2"/><path d="M463.3 960.4V966.4"/></g><circle cx="467.6" cy="974.8" r="5.6" fill="#1f4a4c"/><rect x="466.30" y="967.40" width="2.6" height="3.00" fill="#1f4a4c" transform="rotate(0.0 467.6 974.8)"/><rect x="466.30" y="967.40" width="2.6" height="3.00" fill="#1f4a4c" transform="rotate(45.0 467.6 974.8)"/><rect x="466.30" y="967.40" width="2.6" height="3.00" fill="#1f4a4c" transform="rotate(90.0 467.6 974.8)"/><rect x="466.30" y="967.40" width="2.6" height="3.00" fill="#1f4a4c" transform="rotate(135.0 467.6 974.8)"/><rect x="466.30" y="967.40" width="2.6" height="3.00" fill="#1f4a4c" transform="rotate(180.0 467.6 974.8)"/><rect x="466.30" y="967.40" width="2.6" height="3.00" fill="#1f4a4c" transform="rotate(225.0 467.6 974.8)"/><rect x="466.30" y="967.40" width="2.6" height="3.00" fill="#1f4a4c" transform="rotate(270.0 467.6 974.8)"/><rect x="466.30" y="967.40" width="2.6" height="3.00" fill="#1f4a4c" transform="rotate(315.0 467.6 974.8)"/><circle cx="467.6" cy="974.8" r="2.7" fill="#cfe1e3"/></svg>
<div class="t" style="left:492px;top:949px;font-size:24px;color:#1f4a4c">同期</div>
<div class="chip" style="top:1004px"></div>
<svg style="left:440px;top:1004px" width="50" height="51" viewBox="440 1004 50 51"><g stroke="#1f4a4c" stroke-width="2.9" stroke-linecap="round"><path d="M453.3 1035.4V1038.3"/><path d="M459.3 1027V1038.3"/><path d="M465.3 1020.4V1038.3"/><path d="M471.5 1030V1038.3"/></g></svg>
<div class="t" style="left:492px;top:1009px;font-size:24px;color:#1f4a4c">同比(求和)</div>
<div class="chip" style="top:1064px"></div>
<svg style="left:440px;top:1064px" width="50" height="51" viewBox="440 1064 50 51"><g stroke="#1f4a4c" stroke-width="2.9" stroke-linecap="round"><path d="M453.3 1095.4V1098.3"/><path d="M459.3 1087V1098.3"/><path d="M465.3 1080.4V1098.3"/><path d="M471.5 1090V1098.3"/></g></svg>
<div class="t" style="left:492px;top:1069px;font-size:24px;color:#1f4a4c">预算(求和)</div>
<svg style="left:605px;top:1004px" width="45" height="51" viewBox="605 1004 45 51"><rect x="616.4" y="1021.5" width="19.6" height="17.8" rx="2" fill="none" stroke="#1f4a4c" stroke-width="2"/><rect x="615.4" y="1020.6" width="21.6" height="3.8" rx="1.5" fill="#1f4a4c"/><path d="M622.3 1018.6v3M630.3 1018.6v3" stroke="#1f4a4c" stroke-width="2" stroke-linecap="round"/><text x="626" y="1034.8" text-anchor="middle" font-family="Liberation Sans" font-weight="bold" font-size="10" fill="#1f4a4c">VS</text></svg>
<div class="t drop" style="left:545px;top:1134px">拖到这里</div>
<div class="t h28" style="left:415px;top:1213px">分析</div>
<svg style="left:741px;top:1221px" width="26" height="25" viewBox="0 0 26 25" fill="none" stroke="#262b30" stroke-width="2.2">
<path d="M14.5 1.5l8.5 8.5-9.5 9.5H6.5L2 15z"/><path d="M8.5 8l8.5 8.5"/><path d="M5 23.5h20"/></svg>
<div class="box" style="left:414px;top:1275px;width:360px;height:134px"></div>
<div class="t" style="left:433px;top:1292px;font-size:24px;color:#383d43">筛选</div>
<div class="t drop" style="left:545px;top:1346px">拖到这里</div>
<div class="box" style="left:414px;top:1422px;width:360px;height:160px"></div>
<div class="t" style="left:433px;top:1440px;font-size:24px;color:#383d43">排序</div>
<svg style="left:486px;top:1445px" width="30" height="30" viewBox="486 1445 30 30">
<path d="M493.4 1471.5V1451" stroke="#262b30" stroke-width="2.8" fill="none"/><path d="M489.2 1453.5l4.2-5.8 4.2 5.8z" fill="#262b30"/>
<text x="506.6" y="1459.6" text-anchor="middle" font-family="Liberation Mono" font-weight="bold" font-size="13" fill="#262b30">A</text>
<text x="506.6" y="1471.6" text-anchor="middle" font-family="Liberation Mono" font-weight="bold" font-size="13" fill="#262b30">Z</text></svg>
<div class="chip" style="top:1484px;height:52px"></div>
<svg style="left:450px;top:1498px" width="25" height="24" viewBox="0 0 25 24" fill="#1f4a4c">
<path d="M5 0v18" stroke="#1f4a4c" stroke-width="2.8"/><path d="M0 16h10l-5 7z"/>
<rect x="10" y="0" width="14" height="3.2"/><rect x="10" y="7" width="10" height="3.2"/><rect x="10" y="14" width="7" height="3.2"/><rect x="10" y="20.5" width="4" height="3.2"/></svg>
<div class="t" style="left:493px;top:1490px;font-size:24px;color:#1f4a4c">目标完成率</div>
<!-- P1 CONTENT -->
<div class="t h28" style="left:28px;top:225px">数据集</div>
<svg style="left:354px;top:230px" width="28" height="30" viewBox="0 0 28 30" fill="none" stroke="#262b30" stroke-width="2.2">
<path d="M9 21H3V7l6-6h10v8"/><path d="M3 7h6V1"/>
<path d="M11 16a7 7 0 0 1 12-2" /><path d="M26 19a7 7 0 0 1-12 3"/></svg>
<svg style="left:354px;top:230px" width="28" height="30" viewBox="0 0 28 30" fill="#262b30">
<path d="M20 9.5l6 4-7 2z"/><path d="M17 26.5l-6-4 7-2z"/></svg>
<svg style="left:33px;top:290px" width="34" height="31" viewBox="0 0 34 31">
<ellipse cx="14" cy="6" rx="13.5" ry="5.5" fill="#aeb3ba"/>
<path d="M1 14c2 1.5 4 2 7 2.5v5c-3-.5-5-1-7-2.5z" fill="#aeb3ba"/>
<path d="M1 22c2 1.5 4 2 7 2.5v5c-3-.5-5-1-7-2.5z" fill="#aeb3ba"/>
<text x="10.5" y="29.8" font-family="Liberation Sans" font-weight="bold" font-size="19.5" fill="#4a7fc1" stroke="#4a7fc1" stroke-width="0.8" textLength="22" lengthAdjust="spacingAndGlyphs">ETL</text></svg>
<div class="t f24" style="left:81px;top:286px;color:#383d43">唯怡poc-预算实际对...</div>
<svg style="left:354px;top:294px" width="30" height="28" viewBox="0 0 30 28" fill="none" stroke="#30353b" stroke-width="2.2">
<path d="M6 22H3V2h19v5"/><circle cx="17" cy="17" r="6.5"/><path d="M21.8 21.8l5 5"/></svg>
<div class="t" style="left:28px;top:342px;font-size:22px;color:#8e949b">最近更新: 2020-11-24 16:25:46</div>
<div class="a" style="left:0;top:402px;width:398px;height:2px;background:#dfe2e8"></div>

<div class="t" style="left:29px;top:424px;font-size:24px;font-weight:bold;color:#262b30">字段</div>
<svg style="left:85px;top:430px" width="26" height="26" viewBox="0 0 26 26" fill="none" stroke="#30353b" stroke-width="2">
<circle cx="13" cy="13" r="11.5"/><path d="M11 11h2.5v7M10.5 18h5.5"/><circle cx="13" cy="7.3" r="0.9" fill="#30353b"/></svg>
<svg style="left:306px;top:429px" width="28" height="28" viewBox="0 0 28 28" fill="none" stroke="#262b30" stroke-width="2.6">
<circle cx="11.5" cy="11.5" r="9"/><path d="M18 18l7.5 7.5"/></svg>
<svg style="left:356px;top:432px" width="24" height="24" viewBox="0 0 24 24" fill="none" stroke="#262b30" stroke-width="2.6">
<path d="M12 0v24M0 12h24"/></svg>
<div class="sb" style="left:386px;top:486px;width:12px;height:489px"></div>
<svg style="left:41px;top:512px" width="26" height="22" viewBox="0 0 26 22">
<text x="0" y="9" font-family="Liberation Mono" font-weight="bold" font-size="11" fill="#2450d4" textLength="19" lengthAdjust="spacingAndGlyphs">123</text>
<path d="M21 6.5h3l-1.5-2z" fill="#2450d4"/>
<path d="M1 15l5 5 6-6 4 3 8-8" fill="none" stroke="#2450d4" stroke-width="2"/></svg>
<div class="t fi" style="left:80px;top:504px">动态维度</div>
<svg style="left:41px;top:568px" width="26" height="22" viewBox="0 0 26 22">
<text x="0" y="9" font-family="Liberation Mono" font-weight="bold" font-size="11" fill="#1e4447" textLength="19" lengthAdjust="spacingAndGlyphs">123</text>
<path d="M21 6.5h3l-1.5-2z" fill="#1e4447"/>
<path d="M1 15l5 5 6-6 4 3 8-8" fill="none" stroke="#1e4447" stroke-width="2"/></svg>
<div class="t fi" style="left:80px;top:560px">动态数值</div>
<div class="t" style="left:28px;top:634px;font-size:24px;color:#9aa0a7">维度</div>
<div class="t aa" style="left:40px;top:693px">Aa</div>
<div class="t fi" style="left:80px;top:693px">存货名称（合并）</div>
<div class="t aa" style="left:40px;top:749px">Aa</div>
<div class="t fi" style="left:80px;top:749px">简称</div>
<div class="t aa" style="left:40px;top:805px">Aa</div>
<div class="t fi" style="left:80px;top:805px">产品分类</div>
<div class="t aa" style="left:40px;top:861px">Aa</div>
<div class="t fi" style="left:80px;top:861px">目标市场</div>
<div class="t aa" style="left:40px;top:917px">Aa</div>
<div class="t fi" style="left:80px;top:917px">id</div>
<svg style="left:43px;top:980px" width="23" height="26" viewBox="0 0 23 26" fill="none" stroke="#2450d4" stroke-width="2">
<path d="M5 24H1V3h20v7M6 0v6M15 0v6"/><circle cx="15" cy="18" r="6.5"/><path d="M14 14v4l2 2"/></svg>
<div class="t fi" style="left:80px;top:973px">日期</div>
<svg style="left:140px;top:988px" width="16" height="10" viewBox="0 0 16 10" fill="none" stroke="#2450d4" stroke-width="2"><path d="M1 1l7 7 7-7"/></svg>
<div class="t aa" style="left:40px;top:1029px">Aa</div>
<div class="t fi" style="left:80px;top:1029px">片区</div>
<div class="t aa" style="left:40px;top:1085px">Aa</div>
<div class="t fi" style="left:80px;top:1085px">县名（合并）</div>
<div class="t aa" style="left:40px;top:1141px">Aa</div>
<div class="t fi" style="left:80px;top:1141px">部门</div>
<div class="t aa" style="left:40px;top:1197px">Aa</div>
<div class="t fi" style="left:80px;top:1197px">存货规格</div>
<div class="t aa" style="left:40px;top:1253px">Aa</div>
<div class="t fi" style="left:80px;top:1253px">标志</div>
<div class="t aa" style="left:40px;top:1309px">Aa</div>
<div class="t fi" style="left:80px;top:1309px">客户名称demo</div>
<svg style="left:43px;top:1372px" width="23" height="26" viewBox="0 0 23 26" fill="none" stroke="#2450d4" stroke-width="2">
<path d="M5 24H1V3h20v7M6 0v6M15 0v6"/><circle cx="15" cy="18" r="6.5"/><path d="M14 14v4l2 2"/></svg>
<div class="t fi" style="left:80px;top:1365px">日期处理</div>
<svg style="left:188px;top:1380px" width="16" height="10" viewBox="0 0 16 10" fill="none" stroke="#2450d4" stroke-width="2"><path d="M1 1l7 7 7-7"/></svg>
<div class="t" style="left:28px;top:1438px;font-size:24px;color:#9aa0a7">数值</div>
<svg style="left:40px;top:1500px" width="30" height="30" viewBox="40 1500 30 30"><g stroke="#1d4a4d" stroke-width="2.9" stroke-linecap="round"><path d="M45.3 1521.6V1524.2M51.2 1513V1524.2M57.4 1506.5V1524.2M63.3 1516V1524.2"/></g></svg>
<div class="t fi" style="left:80px;top:1496px">年份</div>

</body>
</html>
